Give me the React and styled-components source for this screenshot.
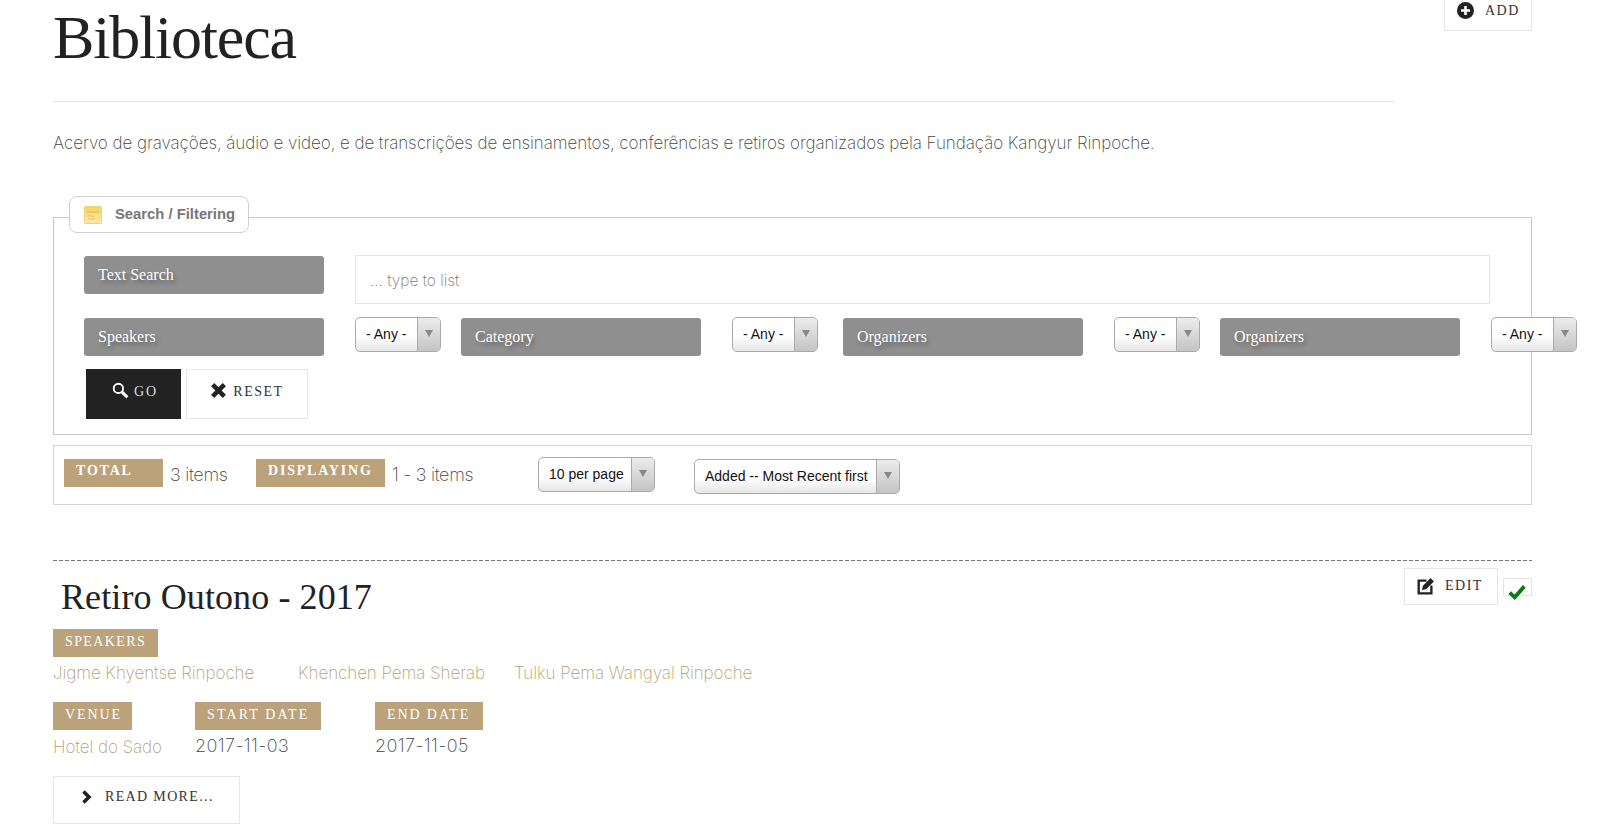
import React from 'react';
import styled, { createGlobalStyle } from 'styled-components';

const serif = '"Liberation Serif", "Times New Roman", serif';
const light = 'Inter, Roboto, "Liberation Sans", sans-serif';
const tan = '#bba27a';

const GlobalStyle = createGlobalStyle`
  html, body {
    margin: 0;
    background: #fff;
    overflow: hidden;
  }
`;

const Page = styled.div`
  width: 1600px;
  height: 826px;
  box-sizing: border-box;
  padding: 0 68px 0 53px;
  overflow: hidden;
`;

const Header = styled.div`
  display: flex;
  justify-content: space-between;
  align-items: flex-start;
  height: 101px;
`;

const Title = styled.h1`
  margin: 0;
  padding-top: 2px;
  font: 400 62px/70px ${serif};
  letter-spacing: -1.2px;
  color: #222;
`;

const OutlineButton = styled.div`
  display: flex;
  align-items: center;
  box-sizing: border-box;
  border: 1px solid #e6e6e6;
  background: #fff;
  font: 400 14px/1 ${serif};
  letter-spacing: 1.5px;
  color: #333;
  text-transform: uppercase;
  svg {
    flex: none;
  }
`;

const AddButton = styled(OutlineButton)`
  width: 88px;
  height: 31px;
  padding: 0 0 9px 12px;
  gap: 11px;
  border-top: 0;
`;

const Rule = styled.div`
  width: 1341px;
  border-top: 1px solid #e4e4e4;
`;

const Intro = styled.p`
  margin: 30px 0 0;
  font: 200 17px/22px ${light};
  letter-spacing: -0.065px;
  color: #444;
  white-space: nowrap;
`;

const Fieldset = styled.div`
  position: relative;
  box-sizing: border-box;
  width: 1479px;
  height: 218px;
  margin-top: 63px;
  padding: 38px 0 0 30px;
  border: 1px solid #c8c8c8;
`;

const Legend = styled.div`
  position: absolute;
  left: 15px;
  top: -22px;
  display: flex;
  align-items: center;
  gap: 13px;
  box-sizing: border-box;
  width: 180px;
  height: 37px;
  padding-left: 14px;
  border: 1px solid #d0d0d0;
  border-radius: 8px;
  background: #fff;
  font: 700 14.8px/1 "Liberation Sans", Arial, sans-serif;
  color: #777;
`;

const FilterRow = styled.div`
  display: flex;
  align-items: flex-start;
  margin-bottom: ${(p) => p.$bottom || 0}px;
`;

const Field = styled.div`
  display: flex;
  align-items: flex-start;
  gap: 31px;
  margin-right: ${(p) => p.$after || 0}px;
`;

const FieldLabel = styled.div`
  box-sizing: border-box;
  width: 240px;
  height: 38px;
  padding-left: 14px;
  border-radius: 3px;
  background: #8f8f8f;
  font: 400 16px/38px ${serif};
  color: #fff;
  text-shadow: 2px 3px 4px rgba(0, 0, 0, 0.35);
`;

const TextInput = styled.div`
  box-sizing: border-box;
  width: 1135px;
  height: 49px;
  margin-top: -1px;
  padding-left: 14px;
  border: 1px solid #e4e4e4;
  font: 200 15.5px/49px ${light};
  color: #777;
`;

const SelectBox = styled.div`
  display: flex;
  box-sizing: border-box;
  height: 35px;
  margin-top: ${(p) => p.$top || 0}px;
  width: ${(p) => p.$width}px;
  border: 1px solid #aaa;
  border-radius: 5px;
  overflow: hidden;
  background: linear-gradient(#fff 55%, #e6e6e6);
  font: 400 14px/33px "Liberation Sans", Arial, sans-serif;
  color: #111;
  position: relative;
  z-index: 1;
`;

const SelectValue = styled.div`
  flex: 1;
  padding-left: 10px;
  white-space: nowrap;
`;

const SelectArrow = styled.div`
  flex: none;
  width: 22px;
  border-left: 1px solid #aaa;
  background: linear-gradient(#ececec, #c4c4c4);
  display: flex;
  align-items: center;
  justify-content: center;
  &::after {
    content: '';
    border-top: 7px solid #888;
    border-left: 4px solid transparent;
    border-right: 4px solid transparent;
    margin-top: -2px;
  }
`;

const Actions = styled.div`
  display: flex;
  gap: 5px;
  margin-left: 2px;
  margin-top: 13px;
`;

const GoButton = styled.div`
  display: flex;
  align-items: center;
  justify-content: center;
  gap: 5px;
  width: 95px;
  height: 50px;
  padding: 0 0 4px 3px;
  box-sizing: border-box;
  background: #222;
  color: #ddd;
  font: 400 14px/1 ${serif};
  letter-spacing: 2px;
  svg {
    margin-top: -3px;
  }
`;

const ResetButton = styled(OutlineButton)`
  justify-content: center;
  width: 122px;
  height: 50px;
  gap: 6px;
  padding-bottom: 4px;
  svg {
    margin-top: -3px;
  }
`;

const StatusBar = styled.div`
  display: flex;
  align-items: flex-start;
  box-sizing: border-box;
  width: 1479px;
  height: 60px;
  margin-top: 10px;
  padding-left: 10px;
  padding-top: 13px;
  border: 1px solid #d4d4d4;
`;

const Count = styled.div`
  font: 200 18px/31px ${light};
  letter-spacing: -0.3px;
  color: #444;
  margin-left: 7px;
  width: ${(p) => p.$width}px;
`;

const StatusTag = styled.div`
  box-sizing: border-box;
  width: ${(p) => p.$width}px;
  height: 28px;
  padding-left: 12px;
  background: ${tan};
  font: 700 14px/23px ${serif};
  letter-spacing: 1.8px;
  color: #fff;
`;

const SortSelect = styled(SelectBox)`
  margin-left: ${(p) => p.$left}px;
`;

const Item = styled.div`
  position: relative;
  width: 1479px;
  margin-top: 55px;
  padding-top: 1px;
  background: repeating-linear-gradient(90deg, #777 0 4px, transparent 4px 6px) top / 100% 1px no-repeat;
`;

const ItemTitle = styled.h2`
  margin: 0;
  padding: 14px 0 0 8px;
  font: 400 36px/44px ${serif};
  letter-spacing: 0.1px;
  color: #222;
`;

const ItemTools = styled.div`
  position: absolute;
  right: 0;
  top: 8px;
  display: flex;
  gap: 5px;
`;

const EditButton = styled(OutlineButton)`
  width: 94px;
  height: 37px;
  padding: 0 0 2px 12px;
  gap: 10px;
`;

const CheckBox = styled.div`
  position: relative;
  box-sizing: border-box;
  width: 29px;
  height: 18px;
  margin-top: 10px;
  border: 1px solid #e6e6e6;
  svg {
    position: absolute;
    left: 4px;
    top: 5px;
  }
`;

const Tag = styled.div`
  box-sizing: border-box;
  width: ${(p) => p.$width}px;
  height: 28px;
  padding-left: 12px;
  background: ${tan};
  font: 400 14px/26px ${serif};
  letter-spacing: ${(p) => p.$track || 1.9}px;
  color: #fff;
  text-transform: uppercase;
  white-space: nowrap;
`;

const Speakers = styled.div`
  padding-top: 10px;
`;

const Names = styled.div`
  display: flex;
  margin-top: 4px;
  height: 41px;
`;

const Name = styled.div`
  font: 200 17px/24px ${light};
  letter-spacing: -0.07px;
  color: #b39f78;
  margin-top: ${(p) => p.$top || 0}px;
  width: ${(p) => (p.$width ? `${p.$width}px` : 'auto')};
`;

const MetaRow = styled.div`
  display: flex;
`;

const MetaCol = styled.div`
  width: ${(p) => p.$width}px;
`;

const DateValue = styled.div`
  margin-top: 4px;
  font: 200 18px/24px ${light};
  letter-spacing: 0.4px;
  color: #444;
`;

const ReadMore = styled(OutlineButton)`
  width: 187px;
  height: 48px;
  margin-top: 17px;
  padding: 0 0 6px 27px;
  gap: 13px;
  letter-spacing: 1.35px;
`;

function Select({ value, width, top, left, as }) {
  const Box = as || SelectBox;
  return (
    <Box $width={width} $top={top} $left={left}>
      <SelectValue>{value}</SelectValue>
      <SelectArrow />
    </Box>
  );
}

function NoteIcon() {
  return (
    <svg width="18" height="18" viewBox="0 0 18 18">
      <defs>
        <linearGradient id="note" x1="0" y1="0" x2="0" y2="1">
          <stop offset="0" stopColor="#f5d35c" />
          <stop offset="1" stopColor="#fbe9a8" />
        </linearGradient>
      </defs>
      <rect x="0.5" y="0.5" width="17" height="17" rx="1" fill="url(#note)" stroke="#efd27a" />
      <path d="M3 6h12" stroke="#e3b93e" strokeWidth="1" />
      <path d="M4 10c2-1 4 1 6 0M4 13c2-1 4 1 7 0" stroke="#d9c48a" strokeWidth="1" fill="none" />
    </svg>
  );
}

function PlusIcon() {
  return (
    <svg width="17" height="17" viewBox="0 0 17 17">
      <circle cx="8.5" cy="8.5" r="8.5" fill="#222" />
      <path d="M8.5 4v9M4 8.5h9" stroke="#fff" strokeWidth="2.6" />
    </svg>
  );
}

function SearchIcon() {
  return (
    <svg width="17" height="17" viewBox="0 0 16 16" fill="none">
      <circle cx="6" cy="6" r="4.4" stroke="#fff" strokeWidth="1.8" />
      <path d="M9.5 9.5l5 5" stroke="#fff" strokeWidth="2.8" />
    </svg>
  );
}

function RemoveIcon() {
  return (
    <svg width="17" height="17" viewBox="0 0 16 16">
      <path d="M2.5 2.5l11 11M13.5 2.5l-11 11" stroke="#222" strokeWidth="4.2" />
    </svg>
  );
}

function EditIcon() {
  return (
    <svg width="18" height="18" viewBox="0 0 17 17" fill="none">
      <path d="M9 3.4H1.6v12h12V8" stroke="#222" strokeWidth="2.2" />
      <path d="M4.6 12.4l1-4.2L12.8 1l3.2 3.2-7.2 7.2z" fill="#222" />
    </svg>
  );
}

function CheckIcon() {
  return (
    <svg width="18" height="16" viewBox="0 0 16 14">
      <path d="M1.5 7.5l4.5 4.2L14.5 2" stroke="#0a7a16" strokeWidth="3.4" fill="none" />
    </svg>
  );
}

function ChevronIcon() {
  return (
    <svg width="11" height="14" viewBox="0 0 11 14">
      <path d="M2.5 1.5L8 7l-5.5 5.5" stroke="#222" strokeWidth="3.6" fill="none" />
    </svg>
  );
}

export default function App() {
  return (
    <Page>
      <GlobalStyle />
      <Header>
        <Title>Biblioteca</Title>
        <AddButton>
          <PlusIcon />
          Add
        </AddButton>
      </Header>
      <Rule />
      <Intro>
        Acervo de gravações, áudio e video, e de transcrições de ensinamentos, conferências e retiros organizados pela Fundação Kangyur Rinpoche.
      </Intro>

      <Fieldset>
        <Legend>
          <NoteIcon />
          Search / Filtering
        </Legend>
        <FilterRow $bottom={14}>
          <Field>
            <FieldLabel>Text Search</FieldLabel>
            <TextInput>... type to list</TextInput>
          </Field>
        </FilterRow>
        <FilterRow>
          <Field $after={20}>
            <FieldLabel>Speakers</FieldLabel>
            <Select value="- Any -" width={86} top={-1} />
          </Field>
          <Field $after={25}>
            <FieldLabel>Category</FieldLabel>
            <Select value="- Any -" width={86} top={-1} />
          </Field>
          <Field $after={20}>
            <FieldLabel>Organizers</FieldLabel>
            <Select value="- Any -" width={86} top={-1} />
          </Field>
          <Field>
            <FieldLabel>Organizers</FieldLabel>
            <Select value="- Any -" width={86} top={-1} />
          </Field>
        </FilterRow>
        <Actions>
          <GoButton>
            <SearchIcon />
            GO
          </GoButton>
          <ResetButton>
            <RemoveIcon />
            Reset
          </ResetButton>
        </Actions>
      </Fieldset>

      <StatusBar>
        <StatusTag $width={99}>TOTAL</StatusTag>
        <Count $width={86}>3 items</Count>
        <StatusTag $width={129}>DISPLAYING</StatusTag>
        <Count $width={146}>1 - 3 items</Count>
        <Select as={SortSelect} value="10 per page" width={117} top={-2} left={0} />
        <Select as={SortSelect} value="Added -- Most Recent first" width={206} top={0} left={39} />
      </StatusBar>

      <Item>
        <ItemTitle>Retiro Outono - 2017</ItemTitle>
        <ItemTools>
          <EditButton>
            <EditIcon />
            Edit
          </EditButton>
          <CheckBox>
            <CheckIcon />
          </CheckBox>
        </ItemTools>
        <Speakers>
          <Tag $width={105} $track={1.4}>Speakers</Tag>
          <Names>
            <Name $width={245}>Jigme Khyentse Rinpoche</Name>
            <Name $width={216}>Khenchen Pema Sherab</Name>
            <Name>Tulku Pema Wangyal Rinpoche</Name>
          </Names>
        </Speakers>
        <MetaRow>
          <MetaCol $width={142}>
            <Tag $width={79}>Venue</Tag>
            <Name $top={5}>Hotel do Sado</Name>
          </MetaCol>
          <MetaCol $width={180}>
            <Tag $width={126} $track={2.1}>Start Date</Tag>
            <DateValue>2017-11-03</DateValue>
          </MetaCol>
          <MetaCol $width={160}>
            <Tag $width={108}>End Date</Tag>
            <DateValue>2017-11-05</DateValue>
          </MetaCol>
        </MetaRow>
        <ReadMore>
          <ChevronIcon />
          Read more...
        </ReadMore>
      </Item>
    </Page>
  );
}
